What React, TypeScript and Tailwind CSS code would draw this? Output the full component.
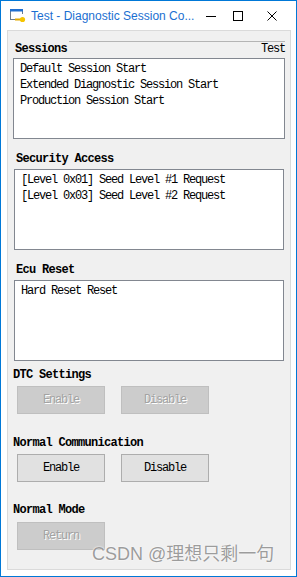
const label = "font-bold text-[12px] leading-[16px] tracking-[-0.7px] text-black whitespace-nowrap";
const item = "text-[12px] leading-[16px] tracking-[-1.2px] text-black whitespace-nowrap";
const btn = "w-[88px] h-[28px] border border-[#adadad] bg-[#e1e1e1] text-[12px] tracking-[-1.2px] text-black flex items-center justify-center";
const btnOff = "w-[88px] h-[28px] border border-[#bfbfbf] bg-[#cccccc] text-[12px] tracking-[-1.2px] text-[#a3a3a3] [text-shadow:1px_1px_0_#ffffff] flex items-center justify-center";

const ListBox = ({ items, inset }: { items: string[]; inset: string }) => (
  <div className={`h-[81px] border border-[#828790] bg-white pt-[2px] pl-[6px] ${inset}`}>
    {items.map((t) => (
      <div key={t} className={item}>
        {t}
      </div>
    ))}
  </div>
);

const App = () => {
  return (
    <div className="relative w-[297px] h-[577px] border border-[#0078d7] bg-white flex flex-col [font-family:Liberation_Mono,Courier_New,monospace]">
      <header className="h-[29px] flex items-center pl-[9px]">
        <svg width="16" height="14" viewBox="0 0 16 14" className="shrink-0">
          <path d="M0.5 11 V0.5 H12.5 V5" fill="none" stroke="#6b7b8c" />
          <line x1="0.5" y1="10.5" x2="5" y2="10.5" stroke="#6b7b8c" />
          <rect x="0" y="0" width="13" height="2.5" fill="#1f6fd0" />
          <line x1="5" y1="10.5" x2="11" y2="10.5" stroke="#e0a800" strokeWidth="2" />
          <circle cx="12.5" cy="10.5" r="2.6" fill="#f5c400" />
        </svg>
        <span className="ml-[5px] text-[12px] text-[#1b6fd1] [font-family:Liberation_Sans,sans-serif] whitespace-nowrap">
          Test - Diagnostic Session Co...
        </span>
        <svg width="10" height="10" viewBox="0 0 10 10" className="ml-auto shrink-0">
          <line x1="0" y1="5.5" x2="10" y2="5.5" stroke="black" />
        </svg>
        <svg width="10" height="10" viewBox="0 0 10 10" className="ml-[17px] shrink-0">
          <rect x="0.5" y="0.5" width="9" height="9" fill="none" stroke="black" />
        </svg>
        <svg width="10" height="10" viewBox="0 0 10 10" className="ml-[24px] mr-[19px] shrink-0">
          <path d="M0.5 0.5 L9.5 9.5 M9.5 0.5 L0.5 9.5" stroke="black" />
        </svg>
      </header>

      <div className="flex-1 ml-[6px] mr-[5px] mb-[6px] border border-[#dadada] bg-[#f0f0f0] flex flex-col">
        <div className="mt-[10px] ml-[7px] mr-[5px] h-[16px] flex">
          <span className={label}>Sessions</span>
          <div className="flex-1 ml-[2px] border-t border-[#b4b4b4] flex justify-end">
            <span className={`${item} -mt-[1px]`}>Test</span>
          </div>
        </div>
        <ListBox
          inset="mt-[1px] ml-[5px] mr-[5px]"
          items={["Default Session Start", "Extended Diagnostic Session Start", "Production Session Start"]}
        />

        <div className={`mt-[12px] ml-[8px] ${label}`}>Security Access</div>
        <ListBox
          inset="mt-[2px] ml-[6px] mr-[6px]"
          items={["[Level 0x01] Seed Level #1 Request", "[Level 0x03] Seed Level #2 Request"]}
        />

        <div className={`mt-[12px] ml-[8px] ${label}`}>Ecu Reset</div>
        <ListBox inset="mt-[2px] ml-[6px] mr-[6px]" items={["Hard Reset Reset"]} />

        <div className={`mt-[6px] ml-[5px] ${label}`}>DTC Settings</div>
        <div className="mt-[3px] ml-[9px] flex gap-[16px]">
          <div className={btnOff}>Enable</div>
          <div className={btnOff}>Disable</div>
        </div>

        <div className={`mt-[21px] ml-[5px] ${label}`}>Normal Communication</div>
        <div className="mt-[3px] ml-[9px] flex gap-[16px]">
          <div className={btn}>Enable</div>
          <div className={btn}>Disable</div>
        </div>

        <div className={`mt-[20px] ml-[5px] ${label}`}>Normal Mode</div>
        <div className="mt-[4px] ml-[9px] flex">
          <div className={btnOff}>Return</div>
        </div>
      </div>

      <div className="absolute left-[91px] top-[541px] text-[18px] leading-[24px] text-[#9c9c9c] [font-family:Liberation_Sans,Noto_Sans_CJK_SC,sans-serif] whitespace-nowrap [text-shadow:0_0_1px_#ffffff,0_0_2px_#ffffff]">
        CSDN @理想只剩一句
      </div>
    </div>
  );
};

export default App;
